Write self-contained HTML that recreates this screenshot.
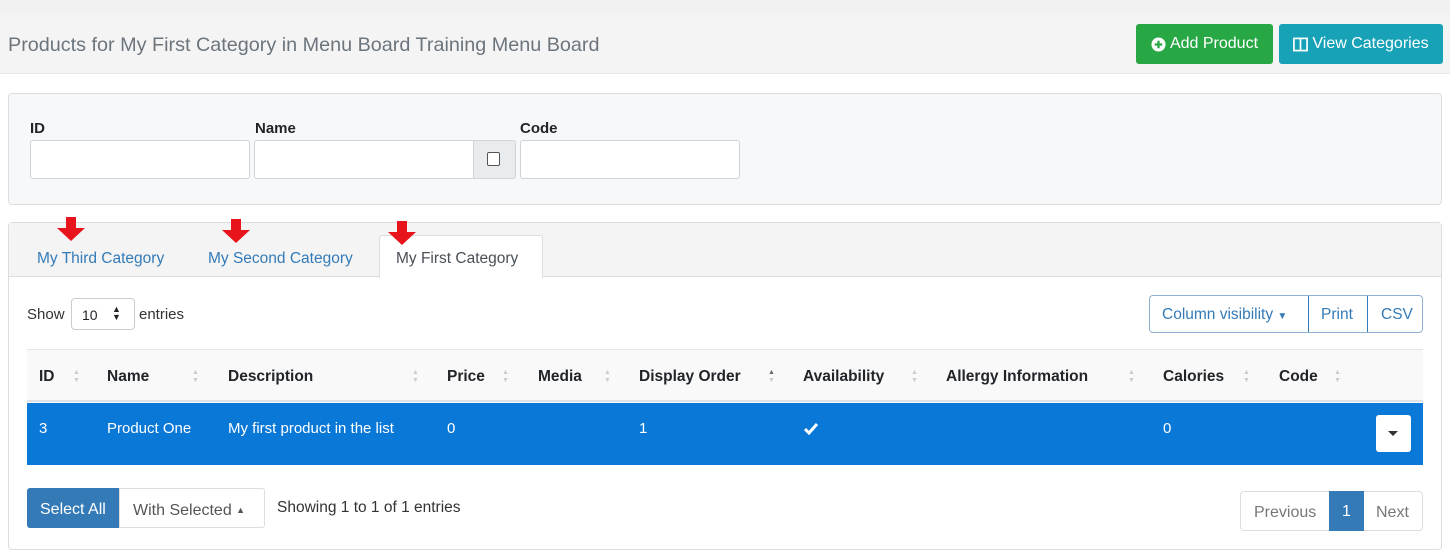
<!DOCTYPE html>
<html><head><meta charset="utf-8"><style>
*{box-sizing:border-box;margin:0;padding:0}
body{width:1450px;height:555px;background:#fff;font-family:"Liberation Sans",sans-serif;font-size:15px;color:#212529;position:relative;overflow:hidden}
.a{position:absolute;white-space:nowrap}
.btn{position:absolute;color:#fff;border-radius:3px;font-size:16px;display:flex;align-items:center;justify-content:center}
.inp{position:absolute;background:#fff;border:1px solid #ced4da;border-radius:3px;height:39px;top:140px}
.lbl{position:absolute;top:120px;font-weight:bold;font-size:15px}
.th{position:absolute;top:368px;font-weight:bold;font-size:15.5px}
.td{position:absolute;top:420px;color:#fff;font-size:15px}
.sa{position:absolute;top:369px;font-size:7px;line-height:8px;color:#ccc}
.arrow{position:absolute;top:217px;width:30px;height:24px}
.tab{position:absolute;top:250px;font-size:15.5px;color:#337ab7}
</style></head><body>
<div class="a" style="left:0;top:0;width:1450px;height:15px;background:#f1f1f1"></div>
<div class="a" style="left:0;top:15px;width:1450px;height:59px;background:#f4f4f4;border-bottom:1px solid #e8e8e8"></div>
<div class="a" style="left:8px;top:34px;font-size:19.8px;color:#6c757d">Products for My First Category in Menu Board Training Menu Board</div>
<div class="btn" style="left:1136px;top:24px;width:137px;height:40px;background:#28a745">
<svg width="15" height="15" viewBox="0 0 16 16" style="margin-right:4px"><circle cx="8" cy="8" r="7.5" fill="#fff"/><path d="M8 4v8M4 8h8" stroke="#28a745" stroke-width="2.4"/></svg>Add Product</div>
<div class="btn" style="left:1279px;top:24px;width:164px;height:40px;background:#17a2b8">
<svg width="15" height="15" viewBox="0 0 16 16" style="margin-right:4px"><rect x="1" y="1.5" width="14" height="13" fill="none" stroke="#fff" stroke-width="1.8"/><path d="M8 1.5v13" stroke="#fff" stroke-width="1.8"/></svg>View Categories</div>

<div class="a" style="left:8px;top:93px;width:1434px;height:112px;background:#f7f8fa;border:1px solid #ddd;border-radius:4px"></div>
<div class="lbl" style="left:30px">ID</div>
<div class="lbl" style="left:255px">Name</div>
<div class="lbl" style="left:520px">Code</div>
<div class="inp" style="left:30px;width:220px"></div>
<div class="inp" style="left:254px;width:262px"></div>
<div class="a" style="left:473px;top:140px;width:43px;height:39px;background:#e9ecef;border:1px solid #ced4da;border-radius:0 3px 3px 0"></div>
<div class="a" style="left:487px;top:152px;width:13px;height:14px;border:1.5px solid #555;border-radius:2px;background:#fff"></div>
<div class="inp" style="left:520px;width:220px"></div>

<div class="a" style="left:8px;top:222px;width:1434px;height:328px;border:1px solid #ddd;border-radius:4px;background:#fff"></div>
<div class="a" style="left:9px;top:223px;width:1432px;height:54px;background:#f4f4f4;border-bottom:1px solid #ddd"></div>
<div class="a" style="left:379px;top:235px;width:164px;height:43px;background:#fff;border:1px solid #ddd;border-bottom:none;border-radius:3px 3px 0 0"></div>
<div class="tab" style="left:37px">My Third Category</div>
<div class="tab" style="left:208px">My Second Category</div>
<div class="tab" style="left:396px;color:#495057">My First Category</div>
<svg class="arrow" style="left:56px" viewBox="0 0 30 24"><path d="M10 0h10v11h9L15 24 1 11h9z" fill="#e8141c"/></svg>
<svg class="arrow" style="left:221px;top:219px" viewBox="0 0 30 24"><path d="M10 0h10v11h9L15 24 1 11h9z" fill="#e8141c"/></svg>
<svg class="arrow" style="left:387px;top:221px" viewBox="0 0 30 24"><path d="M10 0h10v11h9L15 24 1 11h9z" fill="#e8141c"/></svg>

<div class="a" style="left:27px;top:306px;color:#333">Show</div>
<div class="a" style="left:71px;top:298px;width:64px;height:32px;border:1px solid #ccc;border-radius:4px;font-size:14px;padding:8px 0 0 10px">10<span style="position:absolute;left:40px;top:6px;font-size:9px;line-height:8px">▲<br>▼</span></div>
<div class="a" style="left:139px;top:306px;color:#333">entries</div>

<div class="a" style="left:1149px;top:295px;width:274px;height:38px;border:1px solid #8fb0d3;border-radius:4px;color:#337ab7;font-size:15.5px">
<span class="a" style="left:12px;top:10px">Column visibility <span style="font-size:10px">▼</span></span>
<span class="a" style="left:158px;top:0;height:36px;border-left:1px solid #337ab7"></span>
<span class="a" style="left:171px;top:10px">Print</span>
<span class="a" style="left:217px;top:0;height:36px;border-left:1px solid #337ab7"></span>
<span class="a" style="left:231px;top:10px">CSV</span></div>

<div class="a" style="left:27px;top:349px;width:1396px;height:53px;background:#f9f9f9;border-top:1px solid #e5e5e5;border-bottom:2px solid #dee2e6"></div>
<div class="th" style="left:39px">ID</div><div class="th" style="left:107px">Name</div><div class="th" style="left:228px">Description</div><div class="th" style="left:447px">Price</div><div class="th" style="left:538px">Media</div><div class="th" style="left:639px">Display Order</div><div class="th" style="left:803px">Availability</div><div class="th" style="left:946px">Allergy Information</div><div class="th" style="left:1163px">Calories</div><div class="th" style="left:1279px">Code</div>
<div class="sa" style="left:73px">▲<br>▼</div><div class="sa" style="left:192px">▲<br>▼</div><div class="sa" style="left:412px">▲<br>▼</div><div class="sa" style="left:502px">▲<br>▼</div><div class="sa" style="left:604px">▲<br>▼</div><div class="sa" style="left:768px"><span style="color:#666">▲</span><br>▼</div><div class="sa" style="left:911px">▲<br>▼</div><div class="sa" style="left:1128px">▲<br>▼</div><div class="sa" style="left:1243px">▲<br>▼</div><div class="sa" style="left:1334px">▲<br>▼</div>

<div class="a" style="left:27px;top:403px;width:1396px;height:62px;background:#0a78d7"></div>
<div class="td" style="left:39px">3</div><div class="td" style="left:107px">Product One</div><div class="td" style="left:228px">My first product in the list</div><div class="td" style="left:447px">0</div><div class="td" style="left:639px">1</div><div class="td" style="left:1163px">0</div>
<svg class="a" style="left:803px;top:422px" width="16" height="13" viewBox="0 0 16 13"><path d="M2 7l4 4 8-9" fill="none" stroke="#fff" stroke-width="3"/></svg>
<div class="a" style="left:1376px;top:415px;width:35px;height:37px;background:#fff;border-radius:3px"><span class="a" style="left:12px;top:16px;border-left:5px solid transparent;border-right:5px solid transparent;border-top:5px solid #333"></span></div>

<div class="a" style="left:27px;top:488px;width:93px;height:40px;background:#337ab7;border-radius:3px 0 0 3px;color:#fff;font-size:16px;padding:13px 0 0 13px">Select All</div>
<div class="a" style="left:119px;top:488px;width:146px;height:40px;border:1px solid #ddd;border-radius:0 3px 3px 0;color:#555;font-size:16px;padding:13px 0 0 13px">With Selected <span style="font-size:9px;vertical-align:2px">▲</span></div>
<div class="a" style="left:277px;top:499px;color:#333;font-size:15.5px">Showing 1 to 1 of 1 entries</div>

<div class="a" style="left:1240px;top:491px;width:183px;height:40px;border:1px solid #ddd;border-radius:4px;font-size:16px;color:#777">
<span class="a" style="left:13px;top:12px">Previous</span>
<span class="a" style="left:88px;top:-1px;width:35px;height:40px;background:#337ab7;color:#fff;text-align:center;padding-top:12px">1</span>
<span class="a" style="left:135px;top:12px">Next</span></div>
</body></html>
